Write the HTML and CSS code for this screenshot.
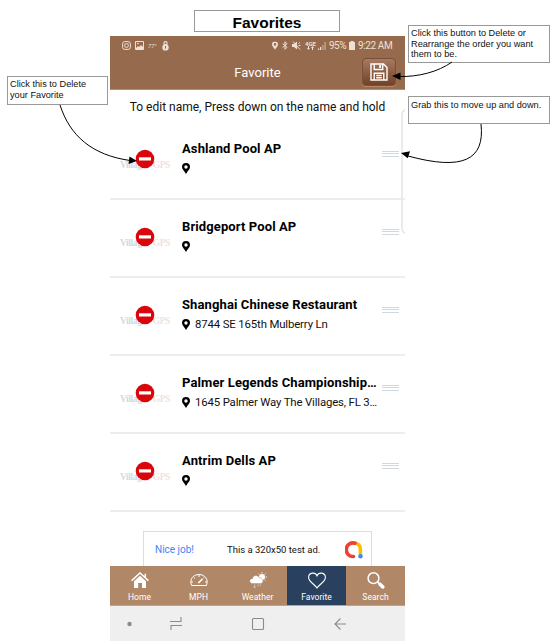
FILE: index.html
```html
<!DOCTYPE html>
<html lang="en">
<head>
<meta charset="utf-8">
<title>Favorites</title>
<link rel="stylesheet" href="styles.css">
</head>
<body>
<svg class="defs" width="0" height="0" aria-hidden="true">
  <symbol id="pin" viewBox="0 0 8 11"><path fill-rule="evenodd" d="M4 0a4 4 0 0 1 4 4c0 2.400-2.500 4.200-4 7C2.500 8.200 0 6.400 0 4a4 4 0 0 1 4-4zm0 2.300a1.700 1.700 0 1 0 0 3.400 1.700 1.700 0 0 0 0-3.400z"/></symbol>
  <symbol id="delete" viewBox="0 0 20 20"><circle cx="10" cy="10" r="9.300" fill="#d9060c"/><rect x="4" y="8.300" width="12" height="3.200" fill="#fff"/></symbol>
</svg>
<div class="page">
  <h1 class="title">Favorites</h1>
  <main class="phone">
    <header class="header">
      <div class="status">
        <svg width="9" height="9" viewBox="0 0 9 9" class="line"><rect x=".6" y=".6" width="7.800" height="7.800" rx="2.200"/><circle cx="4.500" cy="4.500" r="1.900"/><path d="M6.600 2.300h.3"/></svg>
        <svg class="photo" width="9" height="9" viewBox="0 0 9 9"><path fill-rule="evenodd" d="M1 0h7q1 0 1 1v7q0 1-1 1H1Q0 9 0 8V1q0-1 1-1zm0 1v6l2-2 1 1 2-2 2 2V1zm1.200.8h1.400v1.400H2.200z"/></svg>
        <span class="temp">77°</span>
        <svg class="lock" width="7" height="10" viewBox="0 0 7 10"><circle cx="3.500" cy="2.300" r="1.600" fill="none" stroke="#eee0d6" stroke-width="1.200"/><circle cx="3.500" cy="6.400" r="3.200"/><path d="M3.500 5v2.500" stroke="#966b4d"/></svg>
        <span class="grow"></span>
        <svg width="6" height="9" viewBox="0 0 8 11"><use href="#pin"/></svg>
        <svg class="line bt" width="6" height="9" viewBox="0 0 6 9"><path d="M.6 2.500 5 6.300 3 8.300V.7l2 2L.6 6.500"/></svg>
        <svg class="mute" width="9" height="9" viewBox="0 0 9 9"><path d="M0 3h2l3-2.500v8L2 6H0z"/><path d="m1 .5 7 8M6.500 2.500 8 1.500M6.500 4.500h2" stroke="#eee0d6"/></svg>
        <span class="net"><b>4GE</b><svg width="7" height="4" viewBox="0 0 7 4"><path d="M0 2h3L1.500 4zM4 2h3L5.500 0zM1 0h1v2H1zM5 2h1v2H5z"/></svg></span>
        <svg width="8" height="8" viewBox="0 0 8 8"><path d="M0 6.500h1.200V8H0zm2-1.500h1.200v3H2z"/><path opacity=".5" d="M4.200 3h1.300v5H4.200zm2.200-3h1.400v8H6.400z"/></svg>
        <span class="pct">95%</span>
        <svg class="batt" width="6" height="9" viewBox="0 0 6 9"><path d="M1.500 0h3v1H6v8H0V1h1.500z"/></svg>
        <span class="time">9:22 AM</span>
      </div>
      <div class="bar">
        <span class="bar-title">Favorite</span>
        <button class="save" aria-label="Save"><svg width="18" height="18" viewBox="0 0 18 18"><path d="M1 1h12.500L17 4.500V17H1zM4.200 1v5.500h8.500V1M4.200 17v-6.700h9.600V17M6.200 12.500h5.600M6.200 14.700h5.600"/><path class="shutter" d="M9.200 2h1.900v3H9.200z"/></svg></button>
      </div>
    </header>
    <p class="hint">To edit name, Press down on the name and hold</p>
    <ul class="list">
      <li class="row"><div class="logo"><span class="v">Villages</span><span class="g">GPS</span><svg class="del"><use href="#delete"/></svg></div><div class="info"><h2>Ashland Pool AP</h2><p><svg class="pin"><use href="#pin"/></svg></p></div><span class="grip"></span></li>
      <li class="row"><div class="logo"><span class="v">Villages</span><span class="g">GPS</span><svg class="del"><use href="#delete"/></svg></div><div class="info"><h2>Bridgeport Pool AP</h2><p><svg class="pin"><use href="#pin"/></svg></p></div><span class="grip"></span></li>
      <li class="row"><div class="logo"><span class="v">Villages</span><span class="g">GPS</span><svg class="del"><use href="#delete"/></svg></div><div class="info"><h2>Shanghai Chinese Restaurant</h2><p><svg class="pin"><use href="#pin"/></svg><span>8744 SE 165th Mulberry Ln</span></p></div><span class="grip"></span></li>
      <li class="row"><div class="logo"><span class="v">Villages</span><span class="g">GPS</span><svg class="del"><use href="#delete"/></svg></div><div class="info"><h2>Palmer Legends Championship…</h2><p><svg class="pin"><use href="#pin"/></svg><span class="long">1645 Palmer Way The Villages, FL 3…</span></p></div><span class="grip"></span></li>
      <li class="row"><div class="logo"><span class="v">Villages</span><span class="g">GPS</span><svg class="del"><use href="#delete"/></svg></div><div class="info"><h2>Antrim Dells AP</h2><p><svg class="pin"><use href="#pin"/></svg></p></div><span class="grip"></span></li>
    </ul>
    <div class="ad">
      <span class="nice">Nice job!</span><span class="adtext">This a 320x50 test ad.</span>
      <svg width="18" height="18" viewBox="0 0 18 18" fill="none" stroke-width="3.600" stroke-linecap="round"><path stroke="#fbbc05" d="M9 2q6.600.3 6.400 7v5"/><path stroke="#ea4335" d="M10 2.200A6.800 6.800 0 1 0 8.500 15.500"/><circle cx="15.500" cy="15.300" r="2.200" fill="#4285f4" stroke="none"/></svg>
    </div>
    <nav class="tabs">
      <a class="tab"><svg width="18" height="17" viewBox="0 0 18 17"><path fill="#fff" d="M3 9.200 9 3.700l6 5.500V16h-4v-5H7.200v5H3z"/><path fill="none" stroke="#fff" stroke-width="1.500" d="M.6 8.600 9 1l8.400 7.600M14.300 5V1.800"/></svg><span>Home</span></a>
      <a class="tab"><svg width="18" height="17" viewBox="0 0 18 17" fill="none" stroke="#fff"><path stroke-width="1" d="M1.600 13.500C-1 7 3.500 2.500 9 2.500s10 4.500 7.400 11zM9 3v2M3.600 5.200 5 6.500M1 10h2M17 10h-2M14.300 5.200 13 6.500"/><path stroke-width="1.700" d="m8.300 11 4.200-4"/></svg><span>MPH</span></a>
      <a class="tab"><svg width="18" height="17" viewBox="0 0 18 17"><circle cx="13" cy="5" r="3" fill="#fff"/><path stroke="#fff" stroke-width=".8" d="M13 0v1.500M9.500 1.500l1 1M16.500 1.500l-1 1M18 5h-1.500M16.500 8.500l-1-1"/><path fill="#fff" stroke="#b08767" stroke-width=".4" d="M3.500 11.500C-.2 11.300-.1 6.500 3.500 6.700 4 2.500 9.500 2.500 10.300 6c4.200-.6 5 5.300 1.200 5.500z"/><path stroke="#e8d8cc" fill="none" stroke-width=".8" d="M6 12.500 5 15.500h1.500M9 12.500v2M11.500 12.500l-.5 1.500"/></svg><span>Weather</span></a>
      <a class="tab active"><svg width="18" height="17" viewBox="0 0 18 17"><path fill="none" stroke="#fff" stroke-width="1.100" d="M9 3.700C7.500-.1.600.1.600 5.400.6 9.500 6.500 12.200 9 16c2.500-3.800 8.400-6.500 8.400-10.600C17.400.1 10.500-.1 9 3.700z"/></svg><span>Favorite</span></a>
      <a class="tab"><svg width="18" height="17" viewBox="0 0 18 17" fill="none" stroke="#fff"><circle cx="6.500" cy="6.200" r="5.400" stroke-width="1.500"/><path stroke-width="1.500" d="m10.500 10 2 2"/><path stroke-width="3.500" stroke-linecap="round" d="m13 12.200 2.800 2.800"/></svg><span>Search</span></a>
    </nav>
    <div class="system">
      <svg width="295" height="35" viewBox="0 0 295 35" fill="none" stroke="#8b8b8b" stroke-width="1.100"><circle cx="19.500" cy="18" r="2.200" fill="#8b8b8b" stroke="none"/><path d="M60 15.500h11V11M72 19.500H61V24"/><rect x="142.500" y="12.500" width="11" height="11" rx="1"/><path d="M236 18h-11M230.500 12.500 225 18l5.500 5.500"/></svg>
    </div>
  </main>
  <aside class="note note-delete">Click this to Delete<br>your Favorite</aside>
  <aside class="note note-save">Click this button to Delete or<br>Rearrange the order you want<br>them to be.</aside>
  <aside class="note note-grab">Grab this to move up and down.</aside>
  <svg class="arrows" width="556" height="642" viewBox="0 0 556 642" fill="none">
    <path stroke="#e3e5e7" stroke-width="1.500" d="M405 110q-3 1-3 5v113q0 4 3 5"/>
    <path stroke="#000" d="M60 105C70 136 92 155 130 160.500M452 62C438 72 418 77 399 76.500M481 124C485 160 463 171 408 156"/>
    <path fill="#000" d="m137 161-8.500 3 1-7.500zM392 76l8.500-3.500v7.500zM401 153l9-1.800-2.300 7z"/>
  </svg>
</div>
</body>
</html>
```
FILE: styles.css
```css
* { box-sizing: border-box; }
body { margin: 0; background: #fff; font-family: Roboto, sans-serif; color: #111; }
h1, h2, p, ul { margin: 0; padding: 0; }
svg { display: block; flex: none; }
.defs { position: absolute; }
.page { position: relative; width: 556px; height: 642px; padding-top: 10px; overflow: hidden; }
.title { width: 146px; height: 22px; margin: 0 0 4px 194px; border: 1px solid #999; font: bold 15.500px/24px "Liberation Sans", sans-serif; text-align: center; color: #000; }
.phone { width: 295px; height: 605px; margin-left: 110px; display: flex; flex-direction: column; }
.header { height: 54px; background: #966b4d; border-bottom: 1px solid #bd8b6c; color: #fff; }
.status { height: 18px; padding: 1px 13px 0 12px; display: flex; align-items: center; color: #eee0d6; fill: #eee0d6; font-size: 10px; white-space: nowrap; }
.line { fill: none; stroke: #eee0d6; stroke-width: 1; }
.photo { margin-left: 4px; }
.temp { width: 10px; margin-left: 4px; font-size: 6px; font-style: italic; }
.lock { margin-left: 4px; }
.grow { flex: 1; }
.bt { margin-left: 4px; }
.mute { margin-left: 4px; }
.net { width: 11px; margin: 0 2px 0 4px; display: flex; flex-direction: column; align-items: center; font-size: 6px; line-height: 5px; }
.pct { margin-left: 3px; width: 17px; letter-spacing: -.5px; }
.batt { margin: 0 3px; }
.time { width: 34px; letter-spacing: -.4px; }
.bar { height: 35px; padding-right: 9px; display: grid; grid-template-columns: 1fr 34px; align-items: center; }
.bar-title { padding-left: 43px; text-align: center; font-size: 13px; margin-top: 2px; }
.save { width: 34px; height: 28px; padding: 0; margin-top: 1px; display: grid; place-items: center; border: 1px solid #765039; border-radius: 4px; background: linear-gradient(#a67b60, #744126); box-shadow: 0 1px 1px #b48b70; }
.save svg { fill: none; stroke: #fff; stroke-width: 1.400; }
.save .shutter { fill: #fff; stroke: none; }
.hint { height: 32px; padding-top: 1px; text-align: center; font-size: 12px; line-height: 32px; white-space: nowrap; }
.list { list-style: none; }
.row { height: 78px; padding-left: 10px; display: grid; grid-template-columns: 62px 200px 17px; border-bottom: 2px solid #ededf1; }
.logo { position: relative; height: 20px; margin-top: 33px; font: bold 9.500px/20px "Liberation Serif", serif; letter-spacing: -.4px; white-space: nowrap; width: 50px; display: flex; justify-content: space-between; }
.v { color: #d6d9dd; }
.g { color: #f0e2de; }
.del { position: absolute; left: 15px; top: -6px; width: 20px; height: 20px; }
.info { padding-top: 18px; }
.info h2 { color: #000; font-size: 13px; letter-spacing: .11px; line-height: 17px; white-space: nowrap; }
.info p { height: 20px; margin-top: 1px; display: flex; align-items: center; font-size: 11.500px; letter-spacing: -.15px; white-space: nowrap; }
.info p span { letter-spacing: -.15px; }
.info p .long { letter-spacing: -.16px; }
.pin { width: 8px; height: 11px; margin-right: 5px; }
.info p span { font-size: 11.400px; }
.grip { height: 6px; margin-top: 29px; background: repeating-linear-gradient(#cfd8df 0 1px, transparent 1px 2.400px); }
.ad { width: 229px; height: 35px; margin: 19px 0 0 33px; padding: 1px 8px 0 11px; display: flex; align-items: center; border: 1px solid #ddd; border-bottom: 0; font-size: 9.500px; white-space: nowrap; }
.nice { width: 72px; color: #4285f4; font-size: 10px; }
.adtext { flex: 1; }
.tabs { height: 40px; display: grid; grid-template-columns: repeat(5, 1fr); background: #b08767; border-bottom: 1px solid #c4a28a; }
.tab { padding-top: 6px; display: flex; flex-direction: column; align-items: center; color: #fff; font-size: 8.500px; letter-spacing: .05px; line-height: 16px; }
.active { background: #29405f; }
.system { height: 35px; background: #efefef; }
.note { position: absolute; padding: 2px 2px; border: 1px solid #999; background: #fff; color: #111; font: 9.200px/10.500px "Liberation Sans", sans-serif; white-space: nowrap; }
.note-delete { left: 7px; top: 76px; width: 101px; height: 29px; }
.note-save { left: 408px; top: 25px; width: 142px; height: 38px; }
.note-grab { left: 408px; top: 96px; width: 142px; height: 28px; padding-top: 3px; }
.arrows { position: absolute; left: 0; top: 0; }
```
